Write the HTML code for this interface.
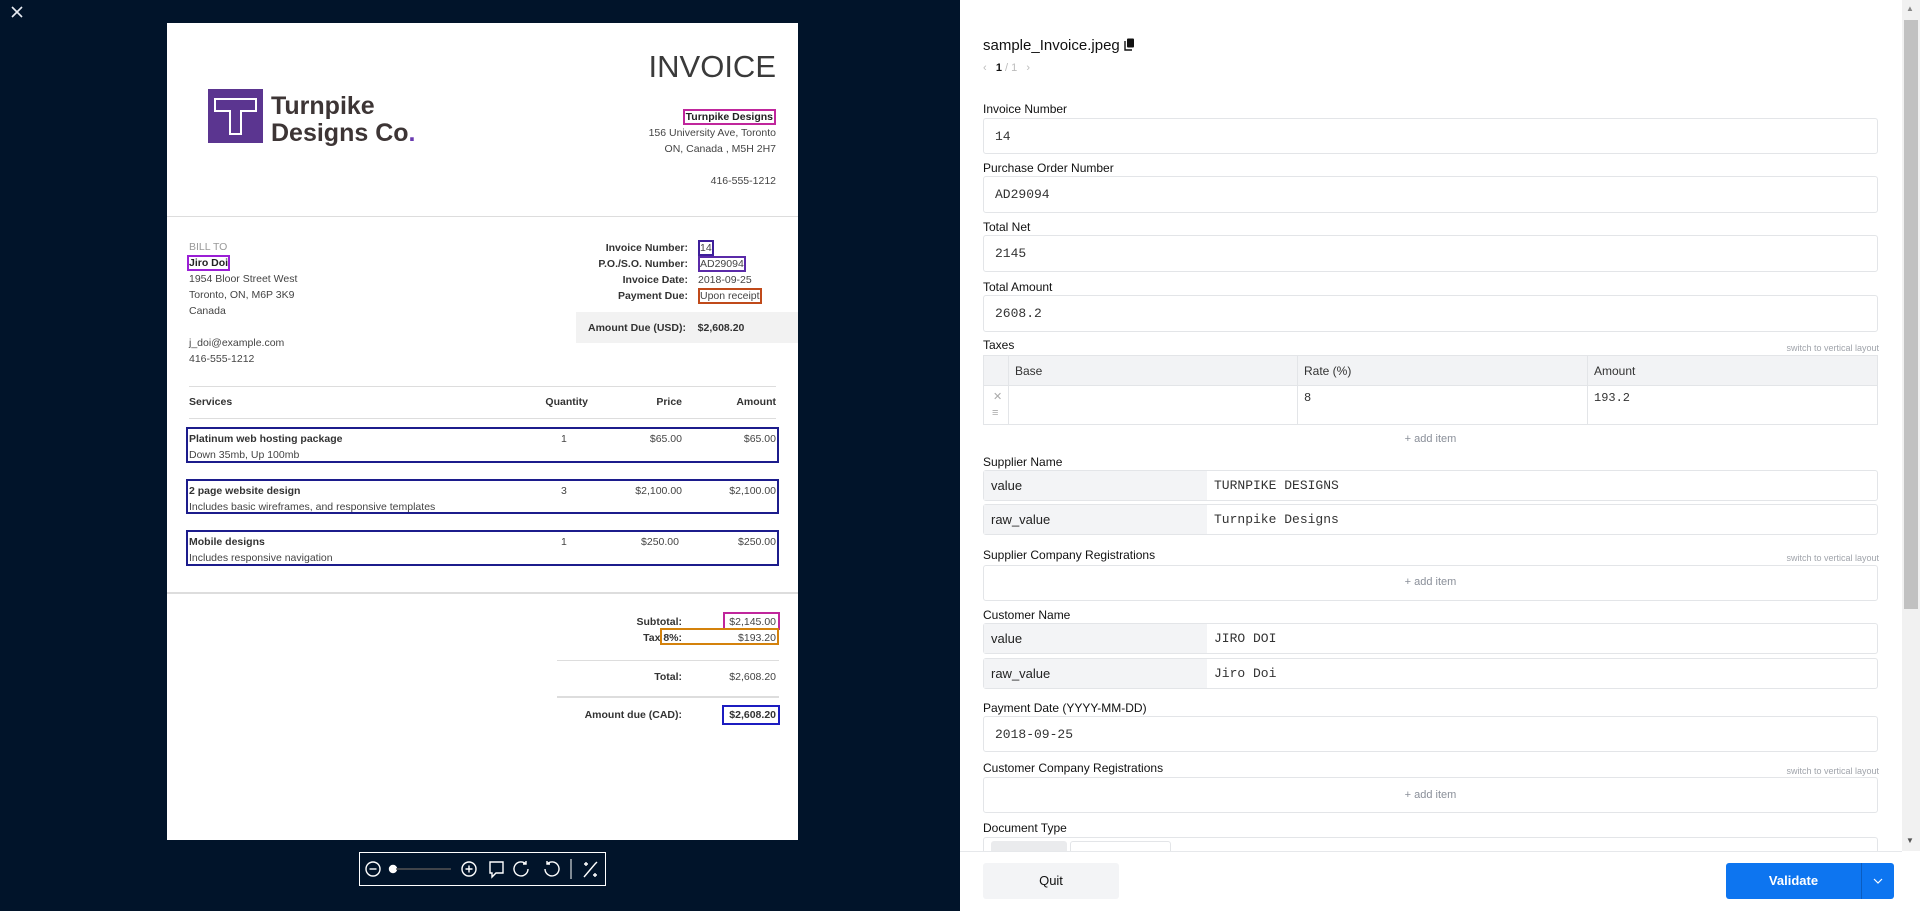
<!DOCTYPE html>
<html><head><meta charset="utf-8"><style>
*{box-sizing:border-box;margin:0;padding:0}
body{width:1920px;height:911px;overflow:hidden;position:relative;font-family:"Liberation Sans",sans-serif;background:#fff}
.a{position:absolute;white-space:nowrap}
#left{position:absolute;left:0;top:0;width:960px;height:911px;background:#01142a}
#page{position:absolute;left:167px;top:23px;width:631px;height:817px;background:#fff;color:#333}
.r{text-align:right}
.bx{position:absolute;border:2px solid}
.lbl{position:absolute;left:983px;font-size:12px;color:#111}
.inp{position:absolute;left:983px;width:895px;border:1px solid #e3e5e8;border-radius:3px;background:#fff;font-family:"Liberation Mono",monospace;font-size:13px;color:#333;padding-left:11px;display:flex;align-items:center}
.kv{position:absolute;left:983px;width:895px;height:31px;border:1px solid #e3e5e8;border-radius:3px;display:flex;font-size:13px}
.kv .k{width:223px;background:#f3f4f6;padding-left:7px;display:flex;align-items:center;color:#222;font-size:13px}
.kv .v{padding-left:7px;display:flex;align-items:center;font-family:"Liberation Mono",monospace;color:#333}
.sw{position:absolute;right:41px;font-size:9px;color:#a0a4ab}
.add{position:absolute;left:983px;width:895px;text-align:center;font-size:11px;color:#8a8f99}
</style></head><body>
<div id="left">
<svg class="a" style="left:10px;top:5px" width="14" height="14" viewBox="0 0 14 14"><path d="M2 2L12 12M12 2L2 12" stroke="#e8ecf2" stroke-width="1.6"/></svg>
<div id="page">
 <div class="a" style="right:22px;top:26px;font-size:31px;color:#3a3a3a">INVOICE</div>
 <div class="a" style="left:41px;top:66px;width:55px;height:54px;background:#5b3590"></div>
 <svg class="a" style="left:41px;top:66px" width="55" height="54" viewBox="0 0 55 54"><path d="M7 10H48V22H33V45H22V22H7Z" fill="none" stroke="#fff" stroke-width="2"/></svg>
 <div class="a" style="left:104px;top:70px;font-size:25px;font-weight:bold;color:#3d3535;line-height:27px">Turnpike<br>Designs Co<span style="color:#6a3ab0">.</span></div>
 <div class="a r" style="right:22px;top:86px;font-size:10.5px;line-height:16px;color:#444"><span style="font-weight:bold;color:#222;border:2px solid #c0269c;padding:0 1px">Turnpike Designs</span><br>156 University Ave, Toronto<br>ON, Canada , M5H 2H7<br><br>416-555-1212</div>
 <div class="a" style="left:0;top:193px;width:631px;height:1px;background:#ddd"></div>
 <div class="a" style="left:22px;top:216px;font-size:10.5px;line-height:16px;color:#444"><span style="color:#999">BILL TO</span><br><span style="font-weight:bold;color:#222;border:2px solid #9b1fd6;margin-left:-2px">Jiro Doi</span><br>1954 Bloor Street West<br>Toronto, ON, M6P 3K9<br>Canada<br><br>j_doi@example.com<br>416-555-1212</div>
 <div class="a r" style="right:110px;top:217px;font-size:10.5px;line-height:16px;font-weight:bold;color:#333">Invoice Number:<br>P.O./S.O. Number:<br>Invoice Date:<br>Payment Due:</div>
 <div class="a" style="left:531px;top:217px;font-size:10.5px;line-height:16px;color:#444"><span style="border:2px solid #3e1f9a">14</span><br><span style="border:2px solid #5a2aa8">AD29094</span><br>2018-09-25<br><span style="border:2px solid #c04a1a">Upon receipt</span></div>
 <div class="a" style="left:409px;top:289px;width:222px;height:31px;background:#f2f2f2"></div>
 <div class="a" style="left:421px;top:299px;font-size:10.5px;font-weight:bold;color:#333">Amount Due (USD):&nbsp;&nbsp;&nbsp;&nbsp;$2,608.20</div>
 <div class="a" style="left:22px;top:363px;width:587px;height:1px;background:#ddd"></div>
 <div class="a" style="left:22px;top:373px;width:587px;font-size:10.5px;font-weight:bold;color:#333">Services<span class="a" style="right:188px;top:0">Quantity</span><span class="a" style="right:94px;top:0">Price</span><span class="a" style="right:0;top:0">Amount</span></div>
 <div class="a" style="left:22px;top:395px;width:587px;height:1px;background:#ddd"></div>
 <div class="bx" style="left:19px;top:404px;width:593px;height:36px;border-color:#1c1c8c"></div>
 <div class="bx" style="left:19px;top:456px;width:593px;height:35px;border-color:#1c1c8c"></div>
 <div class="bx" style="left:19px;top:507px;width:593px;height:36px;border-color:#1c1c8c"></div>
 <div class="a" style="left:22px;top:408px;width:587px;font-size:10.5px;line-height:16px;color:#444"><b style="color:#333">Platinum web hosting package</b><br>Down 35mb, Up 100mb<span class="a" style="left:372px;top:0">1</span><span class="a" style="right:94px;top:0">$65.00</span><span class="a" style="right:0;top:0">$65.00</span></div>
 <div class="a" style="left:22px;top:460px;width:587px;font-size:10.5px;line-height:16px;color:#444"><b style="color:#333">2 page website design</b><br>Includes basic wireframes, and responsive templates<span class="a" style="left:372px;top:0">3</span><span class="a" style="right:94px;top:0">$2,100.00</span><span class="a" style="right:0;top:0">$2,100.00</span></div>
 <div class="a" style="left:22px;top:511px;width:587px;font-size:10.5px;line-height:16px;color:#444"><b style="color:#333">Mobile designs</b><br>Includes responsive navigation<span class="a" style="left:372px;top:0">1</span><span class="a" style="right:97px;top:0">$250.00</span><span class="a" style="right:0;top:0">$250.00</span></div>
 <div class="a" style="left:0;top:569px;width:631px;height:2px;background:#ddd"></div>
 <div class="a r" style="right:116px;top:591px;font-size:10.5px;line-height:16px;font-weight:bold;color:#333">Subtotal:<br>Tax 8%:</div>
 <div class="a r" style="right:22px;top:591px;font-size:10.5px;line-height:16px;color:#444">$2,145.00<br>$193.20</div>
 <div class="bx" style="left:556px;top:589px;width:57px;height:18px;border-color:#c0269c"></div>
 <div class="bx" style="left:493px;top:605px;width:119px;height:17px;border-color:#d4820c"></div>
 <div class="a" style="left:390px;top:637px;width:222px;height:1px;background:#ddd"></div>
 <div class="a r" style="right:116px;top:648px;font-size:10.5px;font-weight:bold;color:#333">Total:</div>
 <div class="a r" style="right:22px;top:648px;font-size:10.5px;color:#444">$2,608.20</div>
 <div class="a" style="left:390px;top:673px;width:222px;height:2px;background:#ddd"></div>
 <div class="a r" style="right:116px;top:686px;font-size:10.5px;font-weight:bold;color:#333">Amount due (CAD):</div>
 <div class="a r" style="right:22px;top:686px;font-size:10.5px;font-weight:bold;color:#333">$2,608.20</div>
 <div class="bx" style="left:555px;top:682px;width:58px;height:20px;border-color:#1c1cc0"></div>
</div>
<div class="a" style="left:359px;top:852px;width:247px;height:34px;border:1px solid #fff"></div>
<svg class="a" style="left:359px;top:852px" width="247" height="34" viewBox="0 0 247 34" fill="none" stroke="#fff" stroke-width="1.4">
<circle cx="14" cy="17" r="7"/><path d="M10.5 17H17.5"/>
<circle cx="34" cy="17" r="3.5" fill="#fff"/><path d="M37 17H92" stroke="#555"/>
<circle cx="110" cy="17" r="7"/><path d="M106.5 17H113.5M110 13.5V20.5"/>
<path d="M131 10H144V21H137L133 25V21H131Z"/>
<path d="M167 12A7 7 0 1 0 169 17M167 9V12H164"/>
<path d="M188 12A7 7 0 1 1 186 17M188 9V12H191"/>
<path d="M212 7V27" stroke-width="1"/>
<path d="M225 25L236 12L238 10M227 10V14M225 12H229M236 21V25M234 23H238"/>
</svg>
</div>

<div class="a" style="left:983px;top:37px;font-size:15px;color:#111">sample_Invoice.jpeg</div>
<svg class="a" style="left:1123px;top:38px" width="12" height="13" viewBox="0 0 12 13"><rect x="4" y="0.5" width="7" height="9" rx="1" fill="#111"/><path d="M2 3V12H9" fill="none" stroke="#111" stroke-width="1.4"/></svg>
<div class="a" style="left:983px;top:62px;font-size:11px;color:#bbb">‹&nbsp;&nbsp;&nbsp;<b style="color:#111">1</b> / 1&nbsp;&nbsp;&nbsp;›</div>

<div class="lbl" style="top:102px">Invoice Number</div>
<div class="inp" style="top:118px;height:36px">14</div>
<div class="lbl" style="top:161px">Purchase Order Number</div>
<div class="inp" style="top:176px;height:37px">AD29094</div>
<div class="lbl" style="top:220px">Total Net</div>
<div class="inp" style="top:235px;height:37px">2145</div>
<div class="lbl" style="top:280px">Total Amount</div>
<div class="inp" style="top:295px;height:37px">2608.2</div>
<div class="lbl" style="top:338px">Taxes</div>
<div class="sw" style="top:343px">switch to vertical layout</div>
<div class="a" style="left:983px;top:355px;width:895px;height:70px;border:1px solid #e3e5e8">
 <div class="a" style="left:0;top:0;width:893px;height:30px;background:#f2f3f5;border-bottom:1px solid #e3e5e8"></div>
 <div class="a" style="left:24px;top:0;width:1px;height:68px;background:#e3e5e8"></div>
 <div class="a" style="left:313px;top:0;width:1px;height:68px;background:#e3e5e8"></div>
 <div class="a" style="left:603px;top:0;width:1px;height:68px;background:#e3e5e8"></div>
 <div class="a" style="left:31px;top:8px;font-size:12px;color:#333">Base</div>
 <div class="a" style="left:320px;top:8px;font-size:12px;color:#333">Rate (%)</div>
 <div class="a" style="left:610px;top:8px;font-size:12px;color:#333">Amount</div>
 <div class="a" style="left:9px;top:34px;font-size:11px;color:#aaa">✕</div>
 <div class="a" style="left:8px;top:51px;font-size:11px;color:#aaa">≡</div>
 <div class="a" style="left:320px;top:35px;font-size:12px;font-family:'Liberation Mono',monospace;color:#333">8</div>
 <div class="a" style="left:610px;top:35px;font-size:12px;font-family:'Liberation Mono',monospace;color:#333">193.2</div>
</div>
<div class="add" style="top:433px">+ add item</div>
<div class="lbl" style="top:455px">Supplier Name</div>
<div class="kv" style="top:470px"><div class="k">value</div><div class="v">TURNPIKE DESIGNS</div></div>
<div class="kv" style="top:504px"><div class="k">raw_value</div><div class="v">Turnpike Designs</div></div>
<div class="lbl" style="top:548px">Supplier Company Registrations</div>
<div class="sw" style="top:553px">switch to vertical layout</div>
<div class="inp" style="top:565px;height:36px"></div>
<div class="add" style="top:576px">+ add item</div>
<div class="lbl" style="top:608px">Customer Name</div>
<div class="kv" style="top:623px"><div class="k">value</div><div class="v">JIRO DOI</div></div>
<div class="kv" style="top:658px"><div class="k">raw_value</div><div class="v">Jiro Doi</div></div>
<div class="lbl" style="top:701px">Payment Date (YYYY-MM-DD)</div>
<div class="inp" style="top:716px;height:36px">2018-09-25</div>
<div class="lbl" style="top:761px">Customer Company Registrations</div>
<div class="sw" style="top:766px">switch to vertical layout</div>
<div class="inp" style="top:777px;height:36px"></div>
<div class="add" style="top:789px">+ add item</div>
<div class="lbl" style="top:821px">Document Type</div>
<div class="inp" style="top:837px;height:30px"></div>
<div class="a" style="left:991px;top:841px;width:76px;height:20px;background:#eaebed;border-radius:3px"></div>
<div class="a" style="left:1070px;top:841px;width:101px;height:20px;border:1px solid #e3e5e8;border-radius:3px"></div>

<div class="a" style="left:960px;top:851px;width:942px;height:60px;background:#fff;border-top:1px solid #e6e8eb"></div>
<div class="a" style="left:983px;top:863px;width:136px;height:36px;background:#f3f4f6;border-radius:3px;text-align:center;line-height:36px;font-size:13px;color:#111">Quit</div>
<div class="a" style="left:1726px;top:863px;width:168px;height:36px;background:#0d75f0;border-radius:3px"></div>
<div class="a" style="left:1726px;top:863px;width:135px;height:36px;text-align:center;line-height:36px;font-size:13px;font-weight:bold;color:#fff">Validate</div>
<div class="a" style="left:1861px;top:863px;width:1px;height:36px;background:#0a5cc0"></div>
<svg class="a" style="left:1872px;top:876px" width="12" height="10" viewBox="0 0 12 10"><path d="M2 3L6 7L10 3" fill="none" stroke="#fff" stroke-width="1.2"/></svg>

<div class="a" style="left:1902px;top:0;width:18px;height:851px;background:#f1f1f1"></div>
<div class="a" style="left:1904px;top:20px;width:14px;height:589px;background:#c1c1c1"></div>
<div class="a" style="left:1906px;top:4px;font-size:8px;color:#888">▲</div>
<div class="a" style="left:1906px;top:836px;font-size:8px;color:#555">▼</div>
</body></html>
